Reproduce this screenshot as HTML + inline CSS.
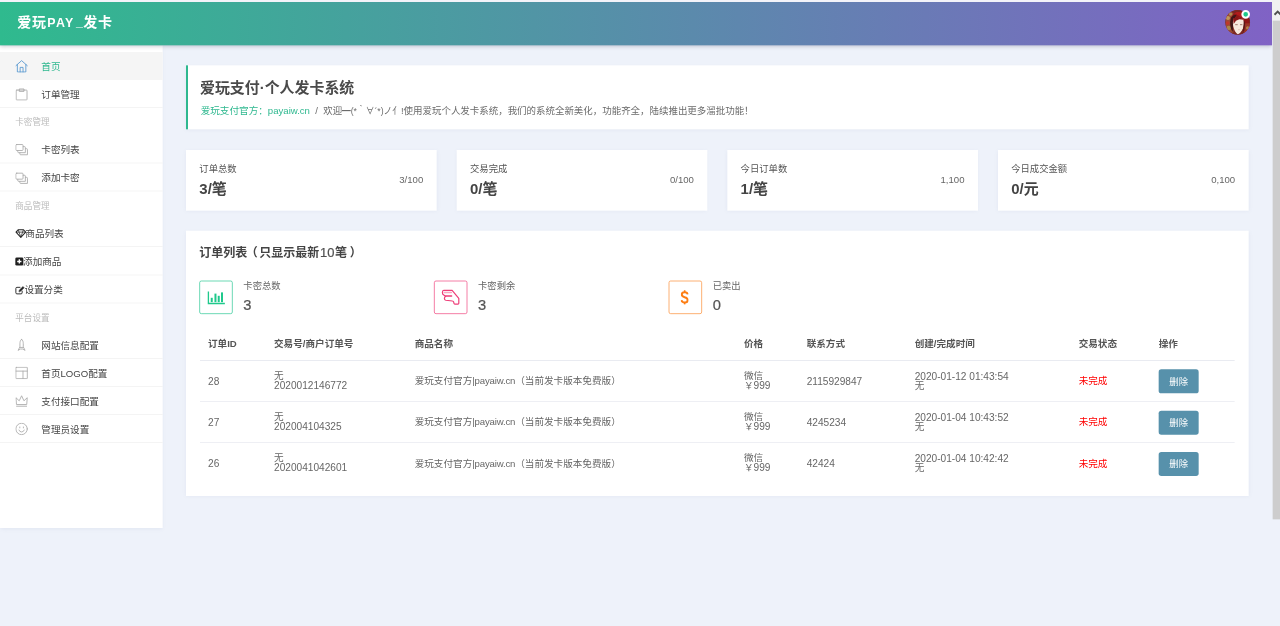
<!DOCTYPE html>
<html lang="zh-CN">
<head>
<meta charset="utf-8">
<title>爱玩PAY_发卡</title>
<style>
*{box-sizing:border-box;margin:0;padding:0}
html,body{width:1280px;height:626px;overflow:hidden;background:#eef2fa}
body{font-family:"Liberation Sans","Noto Sans CJK SC",sans-serif;color:#555}
#stage{position:absolute;left:0;top:0;width:1920px;height:939px;transform:scale(.666667);transform-origin:0 0;background:#eef2fa;overflow:hidden;font-size:14.4px}
#topstrip{position:absolute;left:0;top:0;width:1908px;height:3px;background:#f3f3f9}
#hdr{position:absolute;left:0;top:3px;width:1908px;height:65px;background:linear-gradient(90deg,#2fba8e 0%,#8062c5 100%);box-shadow:0 2px 5px rgba(60,60,90,.22)}
#logo{position:absolute;left:26px;top:-2px;height:65px;line-height:65px;color:#fff;font-size:21px;font-weight:bold;letter-spacing:1px;white-space:nowrap}
#ava{position:absolute;left:1837.800px;top:11.600px;width:37px;height:37px;border-radius:50%;overflow:hidden;background:#7a2a22}
#dot{position:absolute;left:1861.500px;top:11.500px;width:13.500px;height:13.500px;border-radius:50%;background:#1dc98a;border:3px solid #fff}
#side{position:absolute;left:0;top:68px;width:244px;height:723.600px;background:#fff;padding-top:10px;box-shadow:1px 1px 6px rgba(120,130,170,.10)}
.it{position:relative;height:42.100px;border-bottom:1px solid #efefef;line-height:41px;color:#444;white-space:nowrap}
.it.on{background:#f5f5f5;border-bottom-color:#f5f5f5}
.it.on .lb{color:#2eb88f}
.it .ic{position:absolute;left:23.400px;top:12.300px;width:18.800px;height:18.800px}
.it .lb{position:absolute;left:62px;top:2px}
.it .fl{position:absolute;left:23px;top:2px}
.it .fl svg.fa{display:inline-block;vertical-align:-2px;height:14px;overflow:visible}
.gp{height:41px;line-height:44px;padding-left:23px;color:#bbb;font-size:12.8px}
#sb{position:absolute;left:1908px;top:0;width:12px;height:939px;background:#eef2fa}
#sb .tr{position:absolute;left:0;top:0;width:12px;height:31px;background:#f1f1f1}
#sb .th{position:absolute;left:1px;top:31px;width:11px;height:748px;background:#cdcdcd}
.card{position:absolute;background:#fff;box-shadow:0 2px 6px rgba(120,130,170,.09)}

#c1{left:279px;top:98px;width:1593.75px;height:96px;border-left:3px solid #2eb88f}
#c1 .h{position:absolute;left:18px;top:19px;font-size:22.4px;line-height:32px;color:#4a4a4a;font-weight:bold;white-space:nowrap}
#c1 .s{position:absolute;left:19px;top:56.500px;font-size:14.4px;line-height:22px;color:#6b6b6b;white-space:nowrap}
#c1 .s .g{color:#2eb88f}
#c1 .s .emo{display:inline-block;transform:scaleX(.92);transform-origin:0 50%;margin-right:-8px}
#c1 .s .sep{display:inline-block;width:20px;text-align:center}
.st{top:225px;width:375.94px;height:91.3px}
.st .l{position:absolute;left:20px;top:19px;font-size:14px;line-height:18px;color:#555;white-space:nowrap}
.st .v{position:absolute;left:20px;top:44px;font-size:22.4px;line-height:30px;font-weight:bold;color:#444;white-space:nowrap}
.st .r{position:absolute;right:20px;top:35.600px;font-size:14.4px;line-height:18px;color:#666;white-space:nowrap}
#c2{left:279px;top:346.3px;width:1593.75px;height:397.5px}
#c2 .h{position:absolute;left:20px;top:18px;font-size:18px;line-height:28px;color:#444;font-weight:bold;white-space:nowrap}
.ms{position:absolute;top:75px;height:50px}
.ms .bx{position:absolute;left:.200px;top:-.200px;width:50.200px;height:50px;border:1.700px solid #22c690;border-radius:3px}
.ms .l{position:absolute;left:66px;top:-1px;font-size:14px;line-height:18px;color:#666;white-space:nowrap}
.ms .v{position:absolute;left:66px;top:23px;font-size:22px;line-height:28px;color:#555;white-space:nowrap;-webkit-text-stroke:.35px #555}
#tb{position:absolute;left:21px;top:147px;width:1552px}
#tb .hr{position:relative;height:48px;border-bottom:1px solid #dfe1ea;font-weight:bold;color:#555;line-height:45px}
#tb .tr{position:relative;height:61.400px;border-bottom:1px solid #e6e8ef;color:#666;line-height:13.700px}
#tb .tr:last-child{border-bottom:none}
#tb span.c{position:absolute;white-space:nowrap}
#tb .tr span.c{top:calc(50% + .800px);transform:translateY(-50%)}
#tb .tr span.two{top:calc(50% + .600px)}
.k1{left:12px}.k2{left:111px}.k3{left:322px}.k4{left:816px}.k5{left:910px}.k6{left:1072px}.k7{left:1318px}.k8{left:1438px}
.red{color:#f00}
.btn{display:block;width:60px;height:36px;line-height:36px;text-align:center;background:#5791ab;color:#fff;border-radius:4px;font-size:14px}
.n{font-size:15.200px}
</style>
</head>
<body>
<div id="stage">

<div id="side">
  <div class="it on"><svg class="ic" viewBox="0 0 18 18" fill="none" stroke="#5797d0" stroke-width="1.25" stroke-linejoin="round" stroke-linecap="round"><path d="M.8 8.2 9 .9l8.2 7.3"/><path d="M2.9 6.6v10.6h12.2V6.6"/><path d="M6.9 17.2v-6.6h4.2v6.6"/></svg><span class="lb">首页</span></div>
  <div class="it"><svg class="ic" viewBox="0 0 18 18" fill="none" stroke="#ababab" stroke-width="1.25" stroke-linejoin="round" stroke-linecap="round"><rect x="1.2" y="3" width="15.6" height="14.2" rx="1"/><path d="M5.6 3V1.4h6.8V3M5.6 3v1.9h6.8V3"/></svg><span class="lb">订单管理</span></div>
  <div class="gp">卡密管理</div>
  <div class="it"><svg class="ic" viewBox="0 0 18 18" fill="none" stroke="#ababab" stroke-width="1.25" stroke-linejoin="round" stroke-linecap="round"><rect x=".7" y="1.700" width="10.400" height="8.600" rx="1.300"/><path d="M11.400 4.700H13.200Q14.400 4.700 14.400 5.900V13.400H4.700Q3.500 13.400 3.500 12.200V10.600"/><path d="M14.700 7.700H16.200Q17.400 7.700 17.400 8.900V16.400H7.700Q6.500 16.400 6.500 15.200V13.700"/></svg><span class="lb">卡密列表</span></div>
  <div class="it"><svg class="ic" viewBox="0 0 18 18" fill="none" stroke="#ababab" stroke-width="1.25" stroke-linejoin="round" stroke-linecap="round"><rect x=".7" y="1.700" width="10.400" height="8.600" rx="1.300"/><path d="M11.400 4.700H13.200Q14.400 4.700 14.400 5.900V13.400H4.700Q3.500 13.400 3.500 12.200V10.600"/><path d="M14.700 7.700H16.200Q17.400 7.700 17.400 8.900V16.400H7.700Q6.500 16.400 6.500 15.200V13.700"/></svg><span class="lb">添加卡密</span></div>
  <div class="gp">商品管理</div>
  <div class="it"><span class="fl"><svg class="fa" style="width:15px" viewBox="0 0 15 14" fill="none" stroke="#222" stroke-width="1.5" stroke-linejoin="round"><path d="M1 5.2 4.2 1.6h8.1l3.2 3.6-7.25 7.9z"/><path d="M1 5.2h14.5M5.6 5.2l2.65 7.6 2.65-7.6M4.4 1.8l1.2 3.4M12.1 1.8l-1.2 3.4" stroke-width="1.1"/></svg>商品列表</span></div>
  <div class="it"><span class="fl"><svg class="fa" style="width:11.600px" viewBox="0 0 11.600 14" ><rect x="0" y="1.2" width="12" height="12" rx="2" fill="#1f1f1f"/><path d="M6 4v6.4M2.8 7.2h6.4" stroke="#fff" stroke-width="2.1" fill="none"/></svg>添加商品</span></div>
  <div class="it"><span class="fl"><svg class="fa" style="width:13.600px" viewBox="0 0 13.600 14" fill="none" stroke="#222" stroke-width="1.4" stroke-linejoin="round" stroke-linecap="round"><path d="M10.2 8.6v2.6a1.6 1.6 0 0 1-1.6 1.6H2.4A1.6 1.6 0 0 1 .8 11.200V4.600A1.600 1.600 0 0 1 2.400 3H7"/><path d="M5.600 9.400 6 7.200 11.400 1.800 13.200 3.600 7.800 9z" fill="#222" stroke-width=".8"/></svg>设置分类</span></div>
  <div class="gp">平台设置</div>
  <div class="it"><svg class="ic" viewBox="0 0 18 18" fill="none" stroke="#ababab" stroke-width="1.25" stroke-linejoin="round" stroke-linecap="round"><path d="M9 .8C6.9 2.6 6.6 5 6.6 7.2v4.6L4 16.8l3.3-1.9h3.4l3.3 1.9-2.6-5V7.2C11.4 5 11.1 2.6 9 .8z"/><path d="M6.8 12.6h4.4"/></svg><span class="lb">网站信息配置</span></div>
  <div class="it"><svg class="ic" viewBox="0 0 18 18" fill="none" stroke="#ababab" stroke-width="1.25" stroke-linejoin="round" stroke-linecap="round"><rect x=".8" y=".8" width="16.4" height="16.4" rx=".6"/><path d="M.8 6.4h16.4M11 6.4v10.8"/></svg><span class="lb">首页LOGO配置</span></div>
  <div class="it"><svg class="ic" viewBox="0 0 18 18" fill="none" stroke="#ababab" stroke-width="1.25" stroke-linejoin="round" stroke-linecap="round"><path d="M1.6 13.6.9 4.4l4.7 4.4L9 1.6l3.4 7.2 4.7-4.4-.7 9.2z"/><path d="M1.8 16.6h14.4"/></svg><span class="lb">支付接口配置</span></div>
  <div class="it"><svg class="ic" viewBox="0 0 18 18" fill="none" stroke="#ababab" stroke-width="1.25" stroke-linejoin="round" stroke-linecap="round"><circle cx="9" cy="9" r="8.2"/><path d="M5.2 10.6a4 4 0 0 0 7.6 0"/><path d="M6.4 6.2v1.3M11.6 6.2v1.3"/></svg><span class="lb">管理员设置</span></div>
</div>

<div id="main">
  <div class="card" id="c1">
    <div class="h">爱玩支付·个人发卡系统</div>
    <div class="s"><span class="g">爱玩支付官方：payaiw.cn</span><span class="sep">/</span><span style="font-size:14.200px">欢迎<span class="emo">━(*｀∀´*)ノ亻</span>!使用爱玩个人发卡系统，我们的系统全新美化，功能齐全，陆续推出更多溜批功能！</span></div>
  </div>
  <div class="card st" style="left:279px"><div class="l">订单总数</div><div class="v">3/笔</div><div class="r n">3/100</div></div>
  <div class="card st" style="left:684.94px"><div class="l">交易完成</div><div class="v">0/笔</div><div class="r n">0/100</div></div>
  <div class="card st" style="left:1090.88px"><div class="l">今日订单数</div><div class="v">1/笔</div><div class="r n">1,100</div></div>
  <div class="card st" style="left:1496.81px"><div class="l">今日成交金额</div><div class="v">0/元</div><div class="r n">0,100</div></div>
  <div class="card" id="c2">
    <div class="h">订单列表<span style="margin:0 2.500px 0 -2.500px">（</span>只显示最新<span style="font-size:19.400px;font-weight:normal;color:#505050;margin:0 1px 0 1px;-webkit-text-stroke:.300px #505050">10</span>笔<span style="margin-left:4px">）</span></div>
    <div class="ms" style="left:20px"><div class="bx"><svg viewBox="0 0 50 50" style="position:absolute;left:-1.500px;top:-1.500px;width:50px;height:50px" fill="#1fc98c"><path d="M12.600 16.100h2v17.100h23.700v2H12.600z"/><rect x="17.100" y="25.700" width="3" height="6.500"/><rect x="22.700" y="19.400" width="3" height="12.800"/><rect x="27.600" y="22.700" width="3" height="9.500"/><rect x="32.500" y="17.600" width="3" height="14.600"/></svg></div><div class="l">卡密总数</div><div class="v">3</div></div>
    <div class="ms" style="left:372px"><div class="bx" style="border-color:#ee3d78"><svg viewBox="0 0 50 50" style="position:absolute;left:-1.5px;top:-1.5px;width:50px;height:50px" fill="none" stroke="#ee3d78" stroke-width="1.800" stroke-linejoin="round" stroke-linecap="round"><path d="M14.6 14.6H27.200L37.200 26.500V34Q37.200 35.200 36 35.200H31.200Q30.200 35.200 30 34.200L29.400 31.800Q29.100 30.600 27.800 30.500L17.600 29.400Q15.600 29 15.600 26.800 15.600 24.400 17.600 23.400L14.600 21.600Q12.600 20.400 12.600 17.600 12.600 14.600 14.600 14.600Z"/><path d="M17.800 23.100H26.400" stroke-width="2.200"/><path d="M15.400 17.800H26" stroke-width="2.400" opacity=".45"/></svg></div><div class="l">卡密剩余</div><div class="v">3</div></div>
    <div class="ms" style="left:724px"><div class="bx" style="border-color:#fb8a2e"><svg viewBox="0 0 12 22" style="position:absolute;left:16.600px;top:12.800px;width:12px;height:22px" fill="none" stroke="#fd7e14" stroke-width="3" stroke-linecap="butt"><path d="M10.600 6.600C10.200 4.400 8.500 3.200 6 3.200 3.400 3.200 1.700 4.600 1.700 6.800c0 2.400 2 3.300 4.300 4C8.600 11.500 10.500 12.500 10.500 15c0 2.400-1.900 3.800-4.500 3.800-2.600 0-4.400-1.200-4.800-3.500"/><path d="M6 .3V3.600M6 18.400V21.700" stroke-width="2.400"/></svg></div><div class="l">已卖出</div><div class="v">0</div></div>
    <div id="tb">
    <div class="hr"><span class="c k1">订单ID</span><span class="c k2 two">交易号/商户订单号</span><span class="c k3">商品名称</span><span class="c k4">价格</span><span class="c k5">联系方式</span><span class="c k6">创建/完成时间</span><span class="c k7">交易状态</span><span class="c k8">操作</span></div>
    <div class="tr"><span class="c k1 n">28</span><span class="c k2 two">无<br><span class="n">2020012146772</span></span><span class="c k3">爱玩支付官方<span style="letter-spacing:-.250px">|payaiw.cn</span>（当前发卡版本免费版）</span><span class="c k4 two">微信<br>￥<span class="n">999</span></span><span class="c k5 n">2115929847</span><span class="c k6 two"><span class="n">2020-01-12 01:43:54</span><br>无</span><span class="c k7 red">未完成</span><span class="c k8"><span class="btn">删除</span></span></div>
    <div class="tr"><span class="c k1 n">27</span><span class="c k2 two">无<br><span class="n">202004104325</span></span><span class="c k3">爱玩支付官方<span style="letter-spacing:-.250px">|payaiw.cn</span>（当前发卡版本免费版）</span><span class="c k4 two">微信<br>￥<span class="n">999</span></span><span class="c k5 n">4245234</span><span class="c k6 two"><span class="n">2020-01-04 10:43:52</span><br>无</span><span class="c k7 red">未完成</span><span class="c k8"><span class="btn">删除</span></span></div>
    <div class="tr"><span class="c k1 n">26</span><span class="c k2 two">无<br><span class="n">2020041042601</span></span><span class="c k3">爱玩支付官方<span style="letter-spacing:-.250px">|payaiw.cn</span>（当前发卡版本免费版）</span><span class="c k4 two">微信<br>￥<span class="n">999</span></span><span class="c k5 n">42424</span><span class="c k6 two"><span class="n">2020-01-04 10:42:42</span><br>无</span><span class="c k7 red">未完成</span><span class="c k8"><span class="btn">删除</span></span></div>
    </div>
  </div>
</div>

<div id="hdr">
  <div id="logo">爱玩<span style="font-size:18.600px;letter-spacing:1.800px;margin-left:1px">PAY</span><span style="font-size:18.600px;letter-spacing:0;position:relative;top:-2px;margin:0 .500px 0 2.500px">_</span>发卡</div>
  <div id="ava"><svg viewBox="0 0 37 37" width="37" height="37"><defs><filter id="bl" x="-10%" y="-10%" width="120%" height="120%"><feGaussianBlur stdDeviation=".9"/></filter></defs><g filter="url(#bl)"><rect width="37" height="37" fill="#7a2620"/><path d="M0 4h12v30H0z" fill="#9c4a34"/><circle cx="4" cy="12" r="3" fill="#bf9a5a"/><circle cx="5" cy="27" r="3.500" fill="#a8864a"/><circle cx="3.500" cy="19.500" r="2.800" fill="#c0382c"/><circle cx="8" cy="6" r="2.500" fill="#b08a50"/><path d="M9 12C11 3 25 -1 32 7c5 6 4 15 1 22L24 14 13 12z" fill="#8f1616"/><path d="M13 5c6-4 15-2 20 4l-7 3z" fill="#b01c1c"/><path d="M9 11c2-3 5-4 8-4l-5 9-1 17c-4-6-5-16-2-22z" fill="#3e1212"/><path d="M11.800 13.500c3.500-2.500 10-2.500 15 .5 2.200 4 1.500 9.500-.5 14-2 4.500-5 8-8 8.500-3-2-5.500-7.500-6.500-12-.6-3.500-.6-7.500 0-11z" fill="#f6e8dc"/><path d="M11.500 13c4-3.500 11-3.500 16 1.500l-6.500-.5-5 2-3.500 5z" fill="#8a1818"/><path d="M27.500 15c3 4 4 11 1.500 18l-3-3c1.500-5 1.500-11 1.500-15z" fill="#5a1414"/><path d="M30 20h7v14h-9z" fill="#9a3426"/><circle cx="33.500" cy="27" r="2.500" fill="#b0844c"/><circle cx="31" cy="33" r="2.500" fill="#a03a2a"/><path d="M14.800 22h3.800M22 22h3.600" stroke="#7a4a3a" stroke-width="1"/><path d="M19.500 29.500h2" stroke="#c08a7a" stroke-width=".8"/></g></svg></div>
  <div id="dot"></div>
</div>
<div id="topstrip"></div>
<div id="sb"><div class="tr"></div><div class="th"></div><svg style="position:absolute;left:0;top:12px;width:12px;height:14px" viewBox="0 0 12 14"><path d="M3.800 10.100 8.500 5.300 13.200 10.100" fill="none" stroke="#505050" stroke-width="2.800"/></svg></div>
</div>
</body>
</html>
